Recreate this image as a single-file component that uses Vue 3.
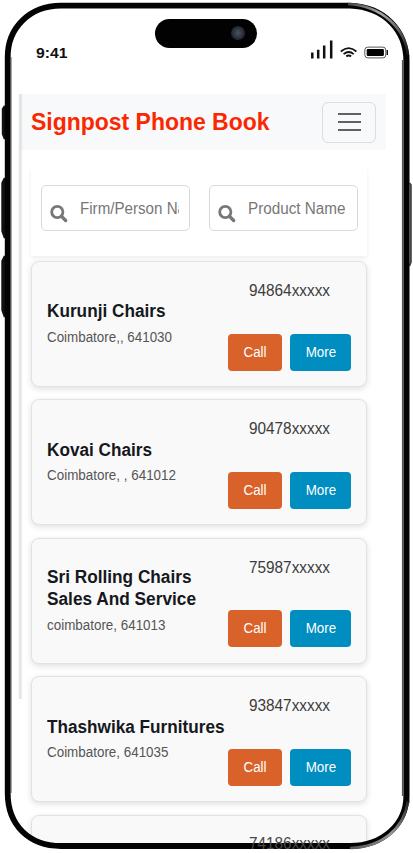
<script setup>
const fields = ['Firm/Person Name', 'Product Name']
const contacts = [
  { name: ['Kurunji Chairs'], w: [118.5], address: 'Coimbatore,, 641030', aw: 125, phone: '94864xxxxx' },
  { name: ['Kovai Chairs'], w: [105], address: 'Coimbatore, , 641012', aw: 129, phone: '90478xxxxx' },
  { name: ['Sri Rolling Chairs', 'Sales And Service'], w: [144.5, 149], address: 'coimbatore, 641013', aw: 118.5, phone: '75987xxxxx' },
  { name: ['Thashwika Furnitures'], w: [177.5], address: 'Coimbatore, 641035', aw: 121.5, phone: '93847xxxxx' },
]
const nextPhone = '74186xxxxx'
// Condense a line of text to its display width.
const vFit = {
  mounted(el, { value }) {
    const natural = el.getBoundingClientRect().width
    if (value && natural) el.style.transform = `scaleX(${value / natural})`
  },
}
</script>

<template>
  <div class="phone">
    <div class="status">
      <span v-fit="31.5" class="fit time">9:41</span>
      <svg class="status-icons" width="78" height="20" viewBox="0 0 78 20">
        <path d="M2.3 12.4v6M8.2 9.8v8.6M14.2 5.6v12.8M21.2.6V18.4" stroke="#111" stroke-width="2.5" />
        <g fill="none" stroke="#111" stroke-width="1.7">
          <path d="M30.8 11.5Q38.7 4.9 46.4 11.5" />
          <path d="M33.6 14.2Q38.7 9.8 43.7 14.2" />
          <path d="M36.3 16.4Q38.7 14.7 41.1 16.4" stroke-width="2" />
        </g>
        <rect x="54.8" y="7.1" width="21" height="10.8" rx="3" fill="none" stroke="#555" />
        <rect x="56.7" y="9.1" width="17.2" height="6.8" rx="1.2" fill="#000" />
        <path d="M77.3 10v5" stroke="#111" stroke-width="1.4" />
      </svg>
    </div>

    <header class="nav">
      <h1 v-fit="238.5" class="fit">Signpost Phone Book</h1>
      <button class="burger" aria-label="Menu"><i></i><i></i><i></i></button>
    </header>

    <main>
      <section class="search">
        <label v-for="(f, i) in fields" :key="f" class="field">
          <svg width="18" height="18" viewBox="0 0 18 18" fill="none" stroke="#777">
            <circle cx="7.3" cy="7" r="5.6" stroke-width="2.8" />
            <path d="M11.6 11.4l4 4.1" stroke-width="3.4" stroke-linecap="round" />
          </svg>
          <span class="clip"><span v-fit="i ? 97.5 : 127" class="fit">{{ f }}</span></span>
        </label>
      </section>

      <article v-for="c in contacts" :key="c.phone" class="card">
        <div class="info">
          <h2><span v-for="(line, i) in c.name" :key="line" v-fit="c.w[i]" class="fit">{{ line }}</span></h2>
          <p><span v-fit="c.aw" class="fit">{{ c.address }}</span></p>
        </div>
        <div class="side">
          <div class="number"><span v-fit="81" class="fit">{{ c.phone }}</span></div>
          <div class="actions">
            <button class="call"><span v-fit="23" class="fit mid">Call</span></button>
            <button class="more"><span v-fit="30.5" class="fit mid">More</span></button>
          </div>
        </div>
      </article>
      <article class="card next">
        <div class="side">
          <div class="number"><span v-fit="81" class="fit">{{ nextPhone }}</span></div>
        </div>
      </article>
    </main>

    <div class="edge"></div>
    <svg class="frame" width="413" height="853" viewBox="0 0 413 853" fill="none">
      <defs>
        <linearGradient id="shine" x1="0" y1="0" x2="1" y2="1">
          <stop offset="0" stop-color="#444" /><stop offset=".35" stop-color="#aaa" />
          <stop offset=".6" stop-color="#777" /><stop offset="1" stop-color="#111" />
        </linearGradient>
        <linearGradient id="shineLow" x1="1" y1="0" x2="0" y2="1">
          <stop offset="0" stop-color="#222" /><stop offset=".5" stop-color="#999" />
          <stop offset="1" stop-color="#555" />
        </linearGradient>
      </defs>
      <path fill="#fff" fill-rule="evenodd" d="M0 0H413V853H0ZM61 4H350Q406 9 408 61V796Q402 844 350 847H61Q12 846 6 796V57Q10 10 61 4Z" />
      <path d="M5 106l-2 3v25l2 5M5 178l-2.5 5v48l2.5 7M5 256l-2.5 5v49l2.5 7" fill="#111" stroke="#111" stroke-width="2.4" />
      <path d="M409.5 183l1.5 2v77l-1.5 4" fill="#555" stroke="#444" stroke-width="1.6" />
      <path d="M11.2 57V793" stroke="#aaa" stroke-width="1.6" />
      <path d="M61 5.7H350C384 7 406.3 30 406.3 61V796C406.3 824 383 846 350 846H61C29 846 7.7 825 7.7 793V57C7.7 28 29 6 61 5.7Z" stroke="#030303" stroke-width="5.8" />
      <path d="M407 55V803" stroke="#030303" stroke-width="4.8" />
      <path d="M402.7 60V796" stroke="#555" stroke-width="1.6" />
      <path d="M348 4C383 6 405 29 408 55" stroke="url(#shine)" stroke-width="2.6" />
      <path d="M408 801C404 828 383 847 350 848" stroke="url(#shineLow)" stroke-width="2.6" />
    </svg>
    <div class="island"><i></i></div>
  </div>
</template>

<style>
body { margin: 0; background: #fff; }
</style>

<style scoped>
* { box-sizing: border-box; }
.phone { position: relative; width: 413px; height: 853px; overflow: hidden; background: #fff; font-family: "Liberation Sans", Arial, sans-serif; }
.fit { display: inline-block; white-space: nowrap; transform-origin: left center; }
.mid { transform-origin: center; }
.status { height: 94px; display: flex; justify-content: space-between; padding: 40px 25px 0 36px; }
.time { height: 25px; font-size: 15px; line-height: 25px; font-weight: 700; color: #111; }
.nav { width: 366px; height: 56px; margin-left: 20px; padding: 0 10px 0 11px; display: flex; align-items: center; justify-content: space-between; background: #f8f9fb; }
h1 { margin: 0; font-size: 24px; line-height: 30px; font-weight: 700; color: #fb2700; }
.burger { width: 54px; height: 41px; flex: none; padding: 0; border: 1px solid #dcdde0; border-radius: 6px; background: #f8f9fb; display: flex; flex-direction: column; align-items: center; justify-content: center; gap: 6px; }
.burger i { width: 23px; height: 2px; background: #606164; }
main { width: 336px; margin: 18px 0 0 31px; }
.search { height: 88px; margin-bottom: 5px; padding: 17px 9px 0 10px; display: flex; justify-content: space-between; box-shadow: 0 2px 4px rgba(0, 0, 0, .07); }
.field { width: 149px; height: 46px; border: 1px solid #d8d9dc; border-radius: 5px; display: flex; align-items: flex-start; padding: 19px 9px 0 8px; }
.field svg { flex: none; }
.clip { width: 99.5px; margin: -8px 0 0 11.5px; overflow: hidden; font-size: 16px; line-height: 24px; color: #777; }
.card { height: 126px; margin-bottom: 12.4px; padding: 0 15px; border: 1px solid #e2e2e2; border-radius: 8px; background: #f9f9f9; box-shadow: 0 2px 6px rgba(0, 0, 0, .13); display: flex; justify-content: space-between; }
.next { height: 50px; margin-bottom: 0; justify-content: flex-end; }
.info { width: 180px; padding-top: 1.4px; display: flex; flex-direction: column; justify-content: center; }
h2 { margin: 0; display: flex; flex-direction: column; align-items: flex-start; font-size: 18px; line-height: 21.6px; font-weight: 700; color: #15181c; }
p { margin: 4px 0 0; height: 21px; font-size: 14px; line-height: 21px; color: #555; }
.side { width: 123px; flex: none; }
.number { padding: 17px 0 0 21px; font-size: 16px; line-height: 24px; color: #3c3c3c; }
.next .number { position: relative; z-index: 1; padding-top: 16px; color: #484848; }
.actions { display: flex; gap: 8px; margin-top: 30.6px; }
.actions button { height: 37px; padding: 0 0 1px; border: 0; border-radius: 4px; color: #fff; font-family: inherit; font-size: 14px; }
.actions .call { width: 54px; background: #d9622b; }
.actions .more { width: 61px; background: #008dbf; }
.edge { position: absolute; left: 18px; top: 94px; width: 5px; height: 605px; background: linear-gradient(90deg, transparent, rgba(0, 0, 0, .12) 40%, transparent); }
.frame { position: absolute; left: 0; top: 0; }
.island { position: absolute; left: 155px; top: 19px; width: 102px; height: 29px; border-radius: 15px; background: #020202; }
.island i { position: absolute; left: 76px; top: 7px; width: 14px; height: 14px; border-radius: 50%; background: radial-gradient(#4b5363, #252a34 60%, #10131a); }
</style>
